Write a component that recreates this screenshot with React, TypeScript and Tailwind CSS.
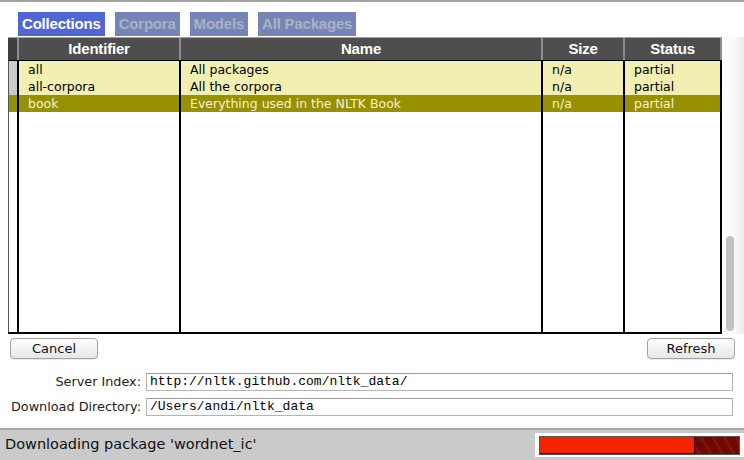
import React from 'react'

const rows = [
  { id: 'all', name: 'All packages', size: 'n/a', status: 'partial', selected: false },
  { id: 'all-corpora', name: 'All the corpora', size: 'n/a', status: 'partial', selected: false },
  { id: 'book', name: 'Everything used in the NLTK Book', size: 'n/a', status: 'partial', selected: true },
]

const tabs = ['Collections', 'Corpora', 'Models', 'All Packages']

const rowFont = { fontFamily: '"DejaVu Sans", sans-serif' }

const Cell = ({ text, selected }: { text: string; selected: boolean }) => (
  <div
    className={`h-[17px] pl-[9px] text-[12.5px] leading-[17px] whitespace-nowrap overflow-hidden ${
      selected ? 'bg-[#979000] text-[#f4f2d8]' : 'bg-[#f1efb2] text-black'
    }`}
  >
    {text}
  </div>
)

const Column = ({ width, keyName }: { width: string; keyName: 'id' | 'name' | 'size' | 'status' }) => (
  <div className={`${width} flex flex-col border-r-2 border-black`}>
    {rows.map((r) => (
      <Cell key={r.id} text={r[keyName]} selected={r.selected} />
    ))}
  </div>
)

const HeaderCell = ({ width, label }: { width: string; label: string }) => (
  <div className={`${width} flex items-center justify-center border-r-2 border-[#8c8c8c] text-white font-bold text-[15px] tracking-[-0.2px]`}>
    {label}
  </div>
)

const Button = ({ label }: { label: string }) => (
  <button className="w-[88px] h-[21px] rounded-[4px] border border-[#a3a3a3] bg-gradient-to-b from-white to-[#e6e6e6] text-[13px] text-[#111] leading-[19px] shadow-[0_1px_0_rgba(0,0,0,0.08)]">
    {label}
  </button>
)

const Field = ({ label, value }: { label: string; value: string }) => (
  <div className="flex items-center h-[18px]">
    <div className="w-[141px] text-right text-[12.8px] text-[#222] whitespace-nowrap">{label}</div>
    <div
      className="ml-[5px] w-[587px] h-[18px] border border-[#b4b4b4] border-t-[#9c9c9c] bg-white pl-[3px] text-[13px] leading-[16px] text-black"
      style={{ fontFamily: '"Liberation Mono", monospace' }}
    >
      {value}
    </div>
  </div>
)

export default function App() {
  return (
    <div className="w-[744px] h-[460px] bg-white flex flex-col overflow-hidden" style={rowFont}>
      <div className="h-[2px] bg-[#a2a2a2]" />

      {/* tabs */}
      <div className="flex gap-[10px] pl-[18px] pt-[10px] h-[35px]" style={{ fontFamily: '"Liberation Sans", sans-serif' }}>
        {tabs.map((t, i) => (
          <div
            key={t}
            className={`h-[24px] px-[4px] flex items-center font-bold text-[15px] tracking-[-0.2px] ${
              i === 0 ? 'bg-[#4f66d4] text-white' : 'bg-[#7585b6] text-[#a9b1c9]'
            }`}
          >
            {t}
          </div>
        ))}
      </div>

      {/* table */}
      <div className="flex h-[297px]">
        <div className="ml-[8px] w-[714px] flex flex-col">
          <div className="flex h-[23px] bg-[#4e4e4e] border-t border-[#a6a6a6]" style={{ fontFamily: '"Liberation Sans", sans-serif' }}>
            <div className="w-[11px] border-r-2 border-[#8c8c8c] bg-[#3e3e3e]" />
            <HeaderCell width="w-[162px]" label="Identifier" />
            <HeaderCell width="w-[362px]" label="Name" />
            <HeaderCell width="w-[82px]" label="Size" />
            <HeaderCell width="w-[97px]" label="Status" />
          </div>
          <div className="flex flex-1 border-t border-black border-b-2 border-l border-l-[#555]">
            <div className="w-[10px] flex flex-col border-r-2 border-black">
              {rows.map((r) => (
                <div key={r.id} className={`h-[17px] ${r.selected ? 'bg-[#979000]' : 'bg-[#c9c9c9]'}`} />
              ))}
            </div>
            <Column width="w-[162px]" keyName="id" />
            <Column width="w-[362px]" keyName="name" />
            <Column width="w-[82px]" keyName="size" />
            <Column width="w-[97px]" keyName="status" />
          </div>
        </div>
        {/* scrollbar */}
        <div className="w-[22px] bg-gradient-to-r from-white via-[#fafafa] to-[#ececec] flex flex-col justify-end pb-[3px]">
          <div className="ml-[4px] w-[8px] h-[95px] rounded-full bg-[#c2c2c2]" />
        </div>
      </div>

      {/* buttons */}
      <div className="flex justify-between pl-[10px] pr-[9px] mt-[4px]">
        <Button label="Cancel" />
        <Button label="Refresh" />
      </div>

      {/* fields */}
      <div className="flex flex-col gap-[7px] mt-[14px]">
        <Field label="Server Index:" value="http://nltk.github.com/nltk_data/" />
        <Field label="Download Directory:" value="/Users/andi/nltk_data" />
      </div>

      {/* status bar */}
      <div className="mt-[12px] flex-1 border-t-2 border-[#a9a9a9] bg-[#cacaca] flex items-center justify-between">
        <div className="pl-[5px] text-[14.5px] text-[#111]">Downloading package 'wordnet_ic'</div>
        <div className="w-[209px] h-[24px] bg-white pl-[4px] pr-[4px] pt-[3px] pb-[2px] self-start mt-[3px]">
          <div className="h-full flex border border-[#555] bg-[repeating-linear-gradient(60deg,#6e0800_0px,#6e0800_6px,#8a1408_8px,#6e0800_10px)]">
            <div className="w-[155px] bg-[#f52400] border-r border-b border-[#3a0000]" />
          </div>
        </div>
      </div>
    </div>
  )
}
